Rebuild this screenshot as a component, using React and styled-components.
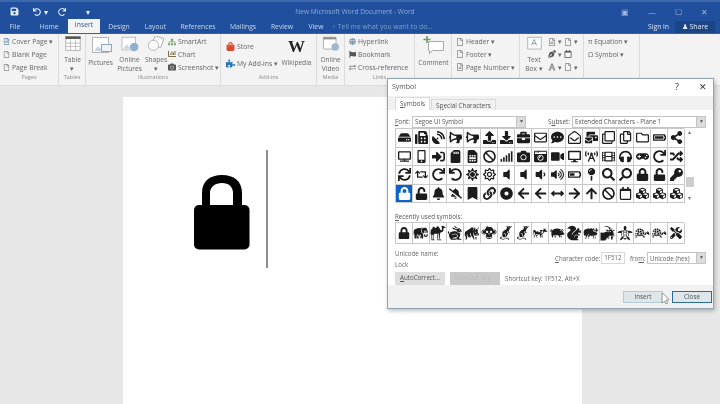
import styled, { createGlobalStyle } from "styled-components";
import {
  FaHdd, FaFax, FaSatelliteDish, FaBullhorn, FaUpload, FaDownload, FaBriefcase, FaRegEnvelope, FaRegEnvelopeOpen,
  FaCommentDots, FaMailBulk, FaRegCopy, FaRegClone, FaRegFolder, FaBatteryFull, FaShareAlt, FaTv, FaMobileAlt,
  FaSignInAlt, FaSdCard, FaSimCard, FaBan, FaSignal, FaCamera, FaCameraRetro, FaVideo, FaDesktop, FaBroadcastTower,
  FaFilm, FaHeadphones, FaGamepad, FaRandom, FaSync, FaRetweet, FaRedo, FaUndo, FaSun, FaRegSun, FaVolumeOff, FaVolumeDown,
  FaVolumeUp, FaBatteryHalf, FaMapPin, FaSearch, FaLock, FaKey, FaUnlock, FaBell, FaBellSlash, FaBookmark, FaLink, FaDotCircle,
  FaArrowLeft, FaArrowsAltH, FaArrowRight, FaArrowUp, FaRegCalendar, FaCubes, FaTools, FaSave, FaMousePointer,
  FaSitemap, FaChartBar, FaShoppingBag, FaPuzzlePiece,
  FaGlobe, FaFlag, FaExchangeAlt, FaRegFile, FaRegFileAlt, FaFont, FaPenNib,
} from "react-icons/fa";
import { GiElephant, GiCamel, GiRabbit, GiBoar, GiMonkey, GiRat, GiSquirrel, GiTurtle, GiCow, GiTortoise, GiPig, GiSheep, GiGoat } from "react-icons/gi";

const Global = createGlobalStyle`
  html, body { margin: 0; padding: 0; background: #e7e7e7; }
  * { box-sizing: border-box; }
`;

const Screen = styled.div`
  position: relative;
  width: 720px;
  height: 404px;
  overflow: hidden;
  font-family: "Open Sans", "Liberation Sans", sans-serif;
  font-size: 7px;
  color: #666;
  background: #e7e7e7;
  filter: blur(0.5px);
`;

const TitleBar = styled.div`
  height: 21px;
  background: #1f4f9d;
  border-top: 2px solid #3b69ab;
  display: flex;
  align-items: center;
  color: #d4e0f0;
`;
const QuickIcons = styled.div`
  width: 290px;
  display: flex;
  align-items: center;
  padding-left: 10px;
  font-size: 8px;
  color: #e8eef7;
`;
const QuickItem = styled.span`
  display: flex;
  margin-left: ${(p) => p.$gap || 0}px;
`;
const DocTitle = styled.div`
  width: 130px;
  text-align: center;
  white-space: nowrap;
  font-size: 6.6px;
  color: #8fadd6;
`;
const WindowIcons = styled.div`
  flex: 1;
  display: flex;
  justify-content: flex-end;
  gap: 19px;
  padding-right: 12px;
  font-size: 8px;
  color: #9fb8dc;
`;

const TabBar = styled.div`
  height: 13px;
  background: #1f4f9d;
  display: flex;
  align-items: stretch;
  border-bottom: 1px solid #2d62ad;
`;
const Tab = styled.div`
  width: ${(p) => p.$w}px;
  text-align: center;
  font-size: 6.8px;
  line-height: 12px;
  color: ${(p) => (p.$active ? "#2b579a" : "#c9d8ee")};
  background: ${(p) => (p.$active ? "#f4f4f4" : "transparent")};
  margin-top: ${(p) => (p.$active ? "-2px" : "0")};
`;
const TellMe = styled.div`
  width: 317px;
  color: #7f9fce;
  font-size: 6.8px;
  line-height: 12px;
`;
const SignIn = styled.div`
  width: 27px;
  color: #dbe6f4;
  font-size: 6.8px;
  line-height: 12px;
`;
const Share = styled.div`
  width: 40px;
  background: #1b4585;
  color: #e4ecf7;
  font-size: 7px;
  line-height: 12px;
  text-align: center;
`;

const Ribbon = styled.div`
  height: 52px;
  background: #f3f3f3;
  display: flex;
  border-bottom: 1px solid #dcdcdc;
`;
const Group = styled.div`
  width: ${(p) => p.$w}px;
  flex: none;
  display: flex;
  flex-direction: column;
  border-right: ${(p) => (p.$plain ? "none" : "1px solid #dcdcdc")};
`;
const GroupBody = styled.div`
  height: 39px;
  display: flex;
  padding-top: 2px;
`;
const GroupLabel = styled.div`
  text-align: center;
  font-size: 5.5px;
  line-height: 9px;
  color: #8c8c8c;
`;
const SmallStack = styled.div`
  width: ${(p) => (p.$w ? `${p.$w}px` : "auto")};
  display: flex;
  flex-direction: column;
  gap: ${(p) => p.$gap ?? 1.5}px;
  padding-left: ${(p) => p.$pad || 0}px;
  padding-top: ${(p) => p.$top || 0}px;
`;
const SmallItem = styled.div`
  height: 11.5px;
  display: flex;
  align-items: center;
  gap: 2px;
  white-space: nowrap;
  font-size: 6.8px;
  svg { color: ${(p) => p.$tint || "#8a8a8a"}; flex: none; }
`;
const Large = styled.div`
  width: ${(p) => p.$w}px;
  flex: none;
  display: flex;
  flex-direction: column;
  align-items: center;
  text-align: center;
  line-height: 9px;
  font-size: 6.6px;
  svg { margin-bottom: 3px; }
`;
const WikiMark = styled.div`
  font-family: "Liberation Serif", serif;
  font-size: 17px;
  font-weight: 700;
  line-height: 22px;
  color: #222;
`;

const Workspace = styled.div`
  height: 318px;
  padding: 11px 138px 0 123px;
`;
const Page = styled.div`
  height: 320px;
  background: #fff;
  display: flex;
  align-items: flex-start;
`;
const LockWrap = styled.div`
  margin: 78px 0 0 71px;
  width: 56px;
`;
const Caret = styled.div`
  width: 1.5px;
  height: 118px;
  margin: 53px 0 0 16px;
  background: #8d8d8d;
`;

const Dialog = styled.div`
  position: absolute;
  left: 387px;
  top: 78px;
  width: 327px;
  height: 231px;
  background: #f1f1f1;
  border: 1.5px solid #8fa3b0;
  box-shadow: 1px 2px 4px rgba(0, 0, 0, 0.25);
  display: flex;
  flex-direction: column;
`;
const DialogTitle = styled.div`
  height: 17px;
  background: #fff;
  display: flex;
  justify-content: space-between;
  align-items: center;
  padding: 0 6px 3px 4px;
  font-size: 7px;
  color: #555;
`;
const TitleButtons = styled.div`
  display: flex;
  gap: 20px;
  font-size: 9px;
  color: #333;
`;
const DialogTabs = styled.div`
  height: 14px;
  display: flex;
  align-items: flex-end;
  padding-left: 7px;
`;
const DialogTab = styled.div`
  height: ${(p) => (p.$active ? 13 : 11)}px;
  padding: 0 4px;
  line-height: 11px;
  font-size: 6.4px;
  color: #555;
  background: ${(p) => (p.$active ? "#fff" : "#f1f1f1")};
  border: 1px solid #dadada;
  border-bottom: none;
  margin-right: 1px;
  u { text-decoration-thickness: 0.5px; }
`;
const Panel = styled.div`
  height: 175px;
  background: #fff;
  padding: 5px 7px 0 7px;
  display: flex;
  flex-direction: column;
`;
const FieldRow = styled.div`
  height: 13px;
  display: flex;
  align-items: center;
  font-size: 6.4px;
  color: #555;
`;
const FieldLabel = styled.span`
  width: ${(p) => p.$w}px;
  flex: none;
  white-space: nowrap;
  margin-left: ${(p) => p.$m || 0}px;
`;
const Select = styled.div`
  width: ${(p) => p.$w}px;
  height: 12px;
  flex: none;
  border: 1px solid #c4c4c4;
  display: flex;
  justify-content: space-between;
  align-items: center;
  padding-left: 2px;
  background: #fff;
  white-space: nowrap;
  font-size: 6.2px;
`;
const SelectArrow = styled.span`
  width: 9px;
  height: 10px;
  background: #dcdcdc;
  border-left: 1px solid #c4c4c4;
  color: #666;
  font-size: 6px;
  line-height: 9px;
  text-align: center;
`;
const GridRow = styled.div`
  display: flex;
`;
const SymbolGrid = styled.div`
  width: 289px;
  display: grid;
  grid-template-columns: repeat(17, 17px);
  grid-auto-rows: 18.5px;
  border-top: 1px solid #c8c8c8;
  border-left: 1px solid #c8c8c8;
`;
const Cell = styled.div`
  display: flex;
  align-items: center;
  justify-content: center;
  border-right: 1px solid #c8c8c8;
  border-bottom: 1px solid #c8c8c8;
  color: ${(p) => (p.$sel ? "#fff" : "#1c1c1c")};
  background: ${(p) => (p.$sel ? "#0a64c8" : "#fff")};
`;
const Flip = styled.span`
  display: flex;
  transform: scaleX(-1);
`;
const Scrollbar = styled.div`
  width: 11px;
  height: 74px;
  display: flex;
  flex-direction: column;
  align-items: center;
  justify-content: space-between;
  font-size: 6px;
  color: #777;
`;
const ScrollThumb = styled.div`
  width: 8px;
  height: 10px;
  margin-top: 34px;
  background: #cdcdcd;
`;
const SectionLabel = styled.div`
  margin-top: 9px;
  height: 10px;
  font-size: 6.2px;
  color: #555;
`;
const RecentGrid = styled(SymbolGrid)`
  grid-auto-rows: 21px;
`;
const UnicodeRow = styled.div`
  margin-top: 4px;
  height: 24px;
  display: flex;
  font-size: 6.2px;
  color: #666;
`;
const UnicodeName = styled.div`
  width: 160px;
  line-height: 11px;
`;
const CodeFields = styled.div`
  display: flex;
  align-items: center;
  height: 14px;
  margin-top: 3px;
`;
const CodeInput = styled.div`
  width: 24px;
  height: 12px;
  border: 1px solid #d8d8d8;
  margin-right: 5px;
  text-align: center;
  line-height: 10px;
`;
const ButtonsRow = styled.div`
  display: flex;
  align-items: center;
  gap: 5px;
  font-size: 6.2px;
  color: #666;
`;
const AutoButton = styled.div`
  width: 50px;
  height: 13px;
  background: ${(p) => (p.$off ? "#c8c8c8" : "#dedede")};
  color: ${(p) => (p.$off ? "#bcbcbc" : "#555")};
  text-align: center;
  line-height: 12px;
`;
const Footer = styled.div`
  flex: 1;
  display: flex;
  justify-content: flex-end;
  align-items: flex-start;
  gap: 9px;
  padding: 6px 1px 0 0;
`;
const FooterButton = styled.div`
  position: relative;
  width: 40px;
  height: 12px;
  background: #dfe6ea;
  border: ${(p) => (p.$focus ? "1.5px solid #2c6c9c" : "1px solid #b3cad8")};
  text-align: center;
  font-size: 6.4px;
  line-height: 10px;
  color: #555;
`;
const Pointer = styled.span`
  position: absolute;
  right: -9px;
  top: 1px;
  font-size: 11px;
  color: #fff;
  svg { stroke: #555; stroke-width: 30px; }
`;

const tabs = [["File", 30], ["Home", 38], ["Insert", 32], ["Design", 38], ["Layout", 35], ["References", 50], ["Mailings", 40], ["Review", 38], ["View", 30]];

const animals = [GiElephant, GiCamel, GiRabbit, GiBoar, GiMonkey, GiRat, GiCow, GiPig, GiGoat, GiSquirrel, GiSheep, GiTurtle, GiTortoise];

const rows = [
  [FaHdd, FaFax, FaSatelliteDish, FaBullhorn, FaBullhorn, FaUpload, FaDownload, FaBriefcase, FaRegEnvelope, FaCommentDots, FaRegEnvelopeOpen, FaMailBulk, FaRegClone, FaRegCopy, FaRegFolder, FaBatteryFull, FaShareAlt],
  [FaTv, FaMobileAlt, FaSignInAlt, FaSdCard, FaSimCard, FaBan, FaSignal, FaCamera, FaCameraRetro, FaVideo, FaDesktop, FaBroadcastTower, FaFilm, FaHeadphones, FaGamepad, FaRedo, FaRandom],
  [FaSync, FaRetweet, FaRedo, FaUndo, FaSun, FaRegSun, FaVolumeOff, FaVolumeOff, FaVolumeDown, FaVolumeUp, FaBatteryHalf, FaMapPin, FaSearch, FaSearch, FaLock, FaUnlock, FaKey],
  [FaLock, FaUnlock, FaBell, FaBellSlash, FaBookmark, FaLink, FaDotCircle, FaArrowLeft, FaArrowLeft, FaArrowsAltH, FaArrowRight, FaArrowUp, FaBan, FaRegCalendar, FaCubes, FaCubes, FaCubes],
];

const recent = [FaLock, GiElephant, GiCamel, GiRabbit, GiBoar, GiMonkey, GiRat, GiRat, GiCow, GiPig, GiSquirrel, GiSheep, GiGoat, GiTurtle, GiTortoise, GiTortoise, FaTools];

const sizeFor = (Icon) => (animals.includes(Icon) ? 16 : 12);

const TableIcon = () => (
  <svg width="18" height="19" viewBox="0 0 18 19">
    <rect x="0.5" y="1" width="17" height="16" fill="#fff" stroke="#a8a8a8" />
    <rect x="0" y="0.5" width="18" height="3" fill="#555" />
    <path d="M6 4v13M12 4v13M1 8.5h16M1 12.5h16" stroke="#b8b8b8" />
  </svg>
);
const PicturesIcon = () => (
  <svg width="22" height="19" viewBox="0 0 22 19">
    <rect x="2.5" y="1.5" width="16" height="15" fill="#fff" stroke="#b5b5b5" />
    <path d="M4 15l4-5 3 3 3-2 3 4z" fill="#c8d4de" />
    <rect x="11.5" y="8.5" width="10" height="7" fill="#eef3f7" stroke="#8fa9bd" />
  </svg>
);
const OnlinePicturesIcon = () => (
  <svg width="22" height="19" viewBox="0 0 22 19">
    <rect x="1.5" y="1.5" width="16" height="15" fill="#fff" stroke="#b5b5b5" />
    <path d="M3 15l4-5 3 3 3-2 3 4z" fill="#c8d4de" />
    <circle cx="16" cy="13" r="5" fill="#8fb0cc" />
  </svg>
);
const ShapesIcon = () => (
  <svg width="20" height="19" viewBox="0 0 20 19">
    <rect x="7" y="1" width="11" height="11" fill="#fff" stroke="#a8a8a8" transform="rotate(20 12 6)" />
    <circle cx="7" cy="11" r="6" fill="#fff" stroke="#a8a8a8" />
  </svg>
);
const VideoIcon = () => (
  <svg width="20" height="19" viewBox="0 0 20 19">
    <rect x="1" y="1.5" width="15" height="14" rx="1" fill="#fff" stroke="#a0a0a0" />
    <rect x="1" y="1.5" width="15" height="2.5" fill="#8e8e8e" />
    <circle cx="15" cy="13" r="4.5" fill="#9fb8cb" />
  </svg>
);
const CommentIcon = () => (
  <svg width="22" height="19" viewBox="0 0 22 19">
    <path d="M5.5 5.5h15v9h-11l-3 3v-3h-1z" fill="#fff" stroke="#a8a8a8" />
    <path d="M4 0v7M0.5 3.5h7" stroke="#6f9a6a" strokeWidth="1.6" />
  </svg>
);
const TextBoxIcon = () => (
  <svg width="17" height="19" viewBox="0 0 17 19">
    <rect x="0.5" y="1.5" width="16" height="14" fill="#fff" stroke="#a8a8a8" />
    <path d="M5 11l3-7 3 7M6 9h4" fill="none" stroke="#7a8fa3" />
  </svg>
);

const App = () => (
  <Screen>
    <Global />
    <TitleBar>
      <QuickIcons>
        <QuickItem><FaSave size={9} /></QuickItem>
        <QuickItem $gap={14}><FaUndo size={8} /></QuickItem>
        <QuickItem $gap={3}>▾</QuickItem>
        <QuickItem $gap={10}><FaRedo size={8} /></QuickItem>
        <QuickItem $gap={20}>▾</QuickItem>
      </QuickIcons>
      <DocTitle>New Microsoft Word Document - Word</DocTitle>
      <WindowIcons>
        <span>▣</span>
        <span>—</span>
        <span>☐</span>
        <span>✕</span>
      </WindowIcons>
    </TitleBar>
    <TabBar>
      {tabs.map(([name, w]) => (
        <Tab key={name} $w={w} $active={name === "Insert"}>{name}</Tab>
      ))}
      <TellMe>♀ Tell me what you want to do...</TellMe>
      <SignIn>Sign in</SignIn>
      <Share>♟ Share</Share>
    </TabBar>
    <Ribbon>
      <Group $w={59}>
        <GroupBody>
          <SmallStack $pad={3}>
            <SmallItem $tint="#6c89a8"><FaRegFileAlt size={7} />Cover Page ▾</SmallItem>
            <SmallItem><FaRegFile size={7} />Blank Page</SmallItem>
            <SmallItem><FaRegFile size={7} />Page Break</SmallItem>
          </SmallStack>
        </GroupBody>
        <GroupLabel>Pages</GroupLabel>
      </Group>
      <Group $w={27}>
        <GroupBody>
          <Large $w={27}><TableIcon />Table<br />▾</Large>
        </GroupBody>
        <GroupLabel>Tables</GroupLabel>
      </Group>
      <Group $w={135}>
        <GroupBody>
          <Large $w={29}><PicturesIcon />Pictures</Large>
          <Large $w={29}><OnlinePicturesIcon />Online<br />Pictures</Large>
          <Large $w={24}><ShapesIcon />Shapes<br />▾</Large>
          <SmallStack>
            <SmallItem $tint="#72a06f"><FaSitemap size={8} />SmartArt</SmallItem>
            <SmallItem $tint="#7d7048"><FaChartBar size={8} />Chart</SmallItem>
            <SmallItem $tint="#555"><FaCamera size={8} />Screenshot ▾</SmallItem>
          </SmallStack>
        </GroupBody>
        <GroupLabel>Illustrations</GroupLabel>
      </Group>
      <Group $w={96}>
        <GroupBody>
          <SmallStack $w={57} $pad={5} $top={5} $gap={5}>
            <SmallItem $tint="#d9482b"><FaShoppingBag size={9} />Store</SmallItem>
            <SmallItem $tint="#2a73b8"><FaPuzzlePiece size={9} />My Add-ins ▾</SmallItem>
          </SmallStack>
          <Large $w={37}>
            <WikiMark>W</WikiMark>
            Wikipedia
          </Large>
        </GroupBody>
        <GroupLabel>Add-ins</GroupLabel>
      </Group>
      <Group $w={28}>
        <GroupBody>
          <Large $w={27}><VideoIcon />Online<br />Video</Large>
        </GroupBody>
        <GroupLabel>Media</GroupLabel>
      </Group>
      <Group $w={70}>
        <GroupBody>
          <SmallStack $pad={4}>
            <SmallItem $tint="#6c89a8"><FaGlobe size={7} />Hyperlink</SmallItem>
            <SmallItem $tint="#555"><FaFlag size={7} />Bookmark</SmallItem>
            <SmallItem><FaExchangeAlt size={7} />Cross-reference</SmallItem>
          </SmallStack>
        </GroupBody>
        <GroupLabel>Links</GroupLabel>
      </Group>
      <Group $w={37}>
        <GroupBody>
          <Large $w={37}><CommentIcon />Comment</Large>
        </GroupBody>
      </Group>
      <Group $w={68}>
        <GroupBody>
          <SmallStack $pad={4}>
            <SmallItem><FaRegFile size={8} />Header ▾</SmallItem>
            <SmallItem><FaRegFile size={8} />Footer ▾</SmallItem>
            <SmallItem><FaRegFileAlt size={8} />Page Number ▾</SmallItem>
          </SmallStack>
        </GroupBody>
      </Group>
      <Group $w={64}>
        <GroupBody>
          <Large $w={28}><TextBoxIcon />Text<br />Box ▾</Large>
          <SmallStack>
            <SmallItem><FaRegFileAlt size={8} />▾ <FaRegFile size={8} />▾</SmallItem>
            <SmallItem $tint="#555"><FaPenNib size={8} />▾ <FaRegCalendar size={8} /></SmallItem>
            <SmallItem><FaFont size={8} />▾ <FaRegFile size={8} />▾</SmallItem>
          </SmallStack>
        </GroupBody>
      </Group>
      <Group $w={56}>
        <GroupBody>
          <SmallStack $pad={4}>
            <SmallItem>π Equation ▾</SmallItem>
            <SmallItem>Ω Symbol ▾</SmallItem>
          </SmallStack>
        </GroupBody>
      </Group>
      <Group $w={46} $plain />
    </Ribbon>
    <Workspace>
      <Page>
        <LockWrap>
          <svg width="56" height="75" viewBox="0 0 56 75">
            <path d="M8 34V18C8 6 16 0 28 0s20 6 20 18v16h-9V18c0-6-4-10-11-10s-12 4-12 10v16z" fill="#000" />
            <rect x="0" y="30" width="55.5" height="44.5" rx="5" fill="#000" />
          </svg>
        </LockWrap>
        <Caret />
      </Page>
    </Workspace>
    <Dialog>
      <DialogTitle>
        Symbol
        <TitleButtons>
          <span>?</span>
          <span>✕</span>
        </TitleButtons>
      </DialogTitle>
      <DialogTabs>
        <DialogTab $active><u>S</u>ymbols</DialogTab>
        <DialogTab>S<u>p</u>ecial Characters</DialogTab>
      </DialogTabs>
      <Panel>
        <FieldRow>
          <FieldLabel $w={17}><u>F</u>ont:</FieldLabel>
          <Select $w={114}>Segoe UI Symbol<SelectArrow>▾</SelectArrow></Select>
          <FieldLabel $w={24} $m={22}>S<u>u</u>bset:</FieldLabel>
          <Select $w={134}>Extended Characters - Plane 1<SelectArrow>▾</SelectArrow></Select>
        </FieldRow>
        <GridRow>
          <SymbolGrid>
            {rows.flatMap((row, r) =>
              row.map((Icon, c) => (
                <Cell key={`${r}-${c}`} $sel={r === 3 && c === 0}>
                  {(r === 0 && (c === 3 || c === 4)) || (r === 2 && c === 13) ? (
                    <Flip><Icon size={13} /></Flip>
                  ) : (
                    <Icon size={13} />
                  )}
                </Cell>
              ))
            )}
          </SymbolGrid>
          <Scrollbar>
            <span>▴</span>
            <ScrollThumb />
            <span>▾</span>
          </Scrollbar>
        </GridRow>
        <SectionLabel><u>R</u>ecently used symbols:</SectionLabel>
        <RecentGrid>
          {recent.map((Icon, i) => (
            <Cell key={i}><Icon size={sizeFor(Icon)} /></Cell>
          ))}
        </RecentGrid>
        <UnicodeRow>
          <UnicodeName>Unicode name:<br />Lock</UnicodeName>
          <CodeFields>
            <FieldLabel $w={46}><u>C</u>haracter code:</FieldLabel>
            <CodeInput>1F512</CodeInput>
            <FieldLabel $w={17}>fro<u>m</u>:</FieldLabel>
            <Select $w={59}>Unicode (hex)<SelectArrow>▾</SelectArrow></Select>
          </CodeFields>
        </UnicodeRow>
        <ButtonsRow>
          <AutoButton><u>A</u>utoCorrect...</AutoButton>
          <AutoButton $off>Shortcut Key...</AutoButton>
          Shortcut key: 1F512, Alt+X
        </ButtonsRow>
      </Panel>
      <Footer>
        <FooterButton>
          Insert
          <Pointer><FaMousePointer /></Pointer>
        </FooterButton>
        <FooterButton $focus>Close</FooterButton>
      </Footer>
    </Dialog>
  </Screen>
);

export default App;
